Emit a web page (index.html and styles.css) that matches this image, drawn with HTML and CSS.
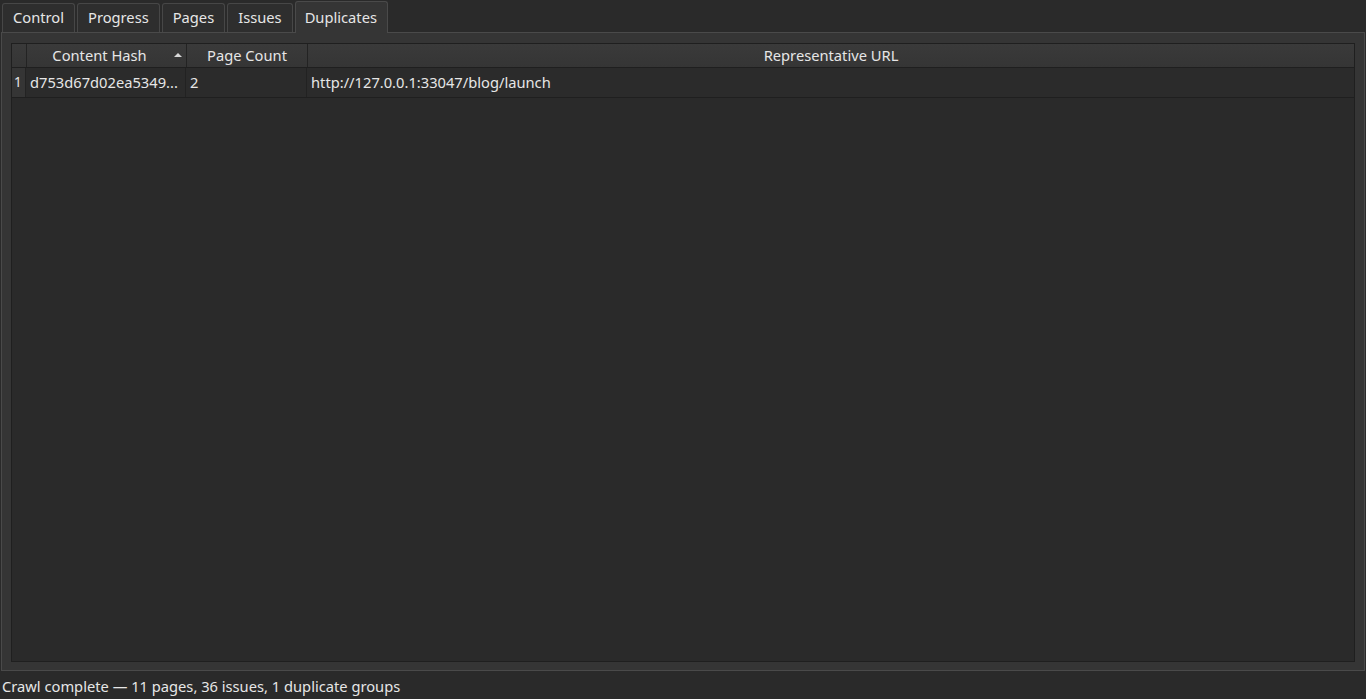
FILE: index.html
```html
<!DOCTYPE html>
<html lang="en">
<head>
    <meta charset="UTF-8">
    <meta name="viewport" content="width=device-width, initial-scale=1.0">
    <title>Duplicates</title>
    <link rel="stylesheet" href="styles.css">
</head>
<body>
    <div class="window">
        <div class="tabbar">
            <div class="tab">Control</div>
            <div class="tab">Progress</div>
            <div class="tab">Pages</div>
            <div class="tab">Issues</div>
            <div class="tab selected">Duplicates</div>
        </div>

        <div class="pane">
            <div class="table">
                <div class="header">
                    <div class="corner"></div>
                    <div class="hcell col-hash sorted">Content Hash
                        <svg class="sort" width="8" height="4" viewBox="0 0 8 4"><path d="M0 4 L4 0 L8 4 Z" fill="#d8d8d8"/></svg>
                    </div>
                    <div class="hcell col-count">Page Count</div>
                    <div class="hcell col-url">Representative URL</div>
                </div>
                <div class="row">
                    <div class="rownum">1</div>
                    <div class="cell col-hash">d753d67d02ea5349...</div>
                    <div class="cell col-count">2</div>
                    <div class="cell col-url">http://127.0.0.1:33047/blog/launch</div>
                </div>
            </div>
        </div>

        <div class="status">Crawl complete — 11 pages, 36 issues, 1 duplicate groups</div>
    </div>
</body>
</html>
```

FILE: styles.css
```css
html, body {
    margin: 0;
    padding: 0;
    height: 100%;
}

body {
    font-family: "Noto Sans", "Open Sans", sans-serif;
    font-size: 14.7px;
    color: #e6e6e6;
    background-color: #2a2a2a;
}

.window {
    display: flex;
    flex-direction: column;
    height: 699px;
    padding: 0 1px;
    box-sizing: border-box;
}

.tabbar {
    display: flex;
    align-items: flex-end;
    gap: 2px;
    height: 32px;
    flex-shrink: 0;
    padding-left: 1px;
}

.tab {
    height: 29px;
    line-height: 27px;
    padding: 0 10px;
    background-color: #2e2e2e;
    border: 1px solid #474747;
    border-bottom: none;
    border-radius: 3px 3px 0 0;
    box-sizing: border-box;
}

.tab.selected {
    height: 32px;
    line-height: 30px;
    padding: 0 10px 0 9px;
    background-color: #353535;
    border-color: #4a4a4a;
    margin-bottom: -1px;
    position: relative;
    z-index: 1;
}

.pane {
    height: 639px;
    flex-shrink: 0;
    box-sizing: border-box;
    background-color: #353535;
    border: 1px solid #4a4a4a;
    padding: 10px 9px 8px 9px;
}

.table {
    height: 100%;
    box-sizing: border-box;
    background-color: #2a2a2a;
    border: 1px solid #1f1f1f;
}

.header, .row {
    display: flex;
}

.header {
    height: 24px;
    line-height: 23px;
    box-sizing: border-box;
    background: linear-gradient(#3a3a3a, #353535);
    border-bottom: 1px solid #1f1f1f;
}

.corner {
    width: 14px;
    border-right: 1px solid #232323;
}

.hcell {
    text-align: center;
    border-right: 1px solid #232323;
    box-sizing: border-box;
    position: relative;
}

.hcell.sorted {
    padding-right: 14px;
}

.sort {
    position: absolute;
    right: 4px;
    top: 9px;
}

.col-hash {
    width: 160px;
}

.col-count {
    width: 121px;
}

.col-url {
    flex: 1;
}

.hcell.col-url {
    border-right: none;
}

.row {
    height: 30px;
    line-height: 29px;
    box-sizing: border-box;
    border-bottom: 1px solid #1f1f1f;
    background-color: #2b2b2b;
}

.rownum {
    width: 14px;
    padding-left: 2px;
    box-sizing: border-box;
    background-color: #353535;
    border-right: 1px solid #232323;
    font-size: 13.5px;
}

.cell {
    padding-left: 4px;
    box-sizing: border-box;
    border-right: 1px solid #222222;
    white-space: nowrap;
    overflow: hidden;
}

.cell.col-url {
    border-right: none;
}

.status {
    flex: 1;
    padding: 5px 2px 0;
    line-height: 20px;
    margin-left: -1px;
}
```
